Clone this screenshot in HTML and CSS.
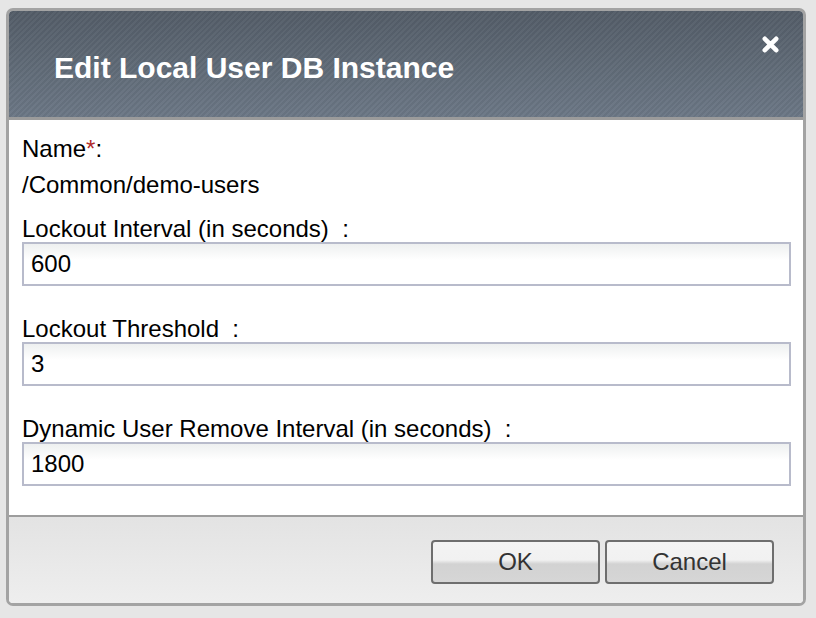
FILE: index.html
```html
<!DOCTYPE html>
<html>
<head>
<meta charset="utf-8">
<link rel="stylesheet" href="styles.css">
</head>
<body>
<div class="dialog">
  <div class="header">
    <h1 class="title">Edit Local User DB Instance</h1>
    <button class="close" aria-label="Close">
      <svg width="19" height="19" viewBox="0 0 19 19"><path d="M3.8 3.8 L15.2 15.2 M15.2 3.8 L3.8 15.2" stroke="#fff" stroke-width="4.6" stroke-linecap="round"/></svg>
    </button>
  </div>
  <div class="content">
    <div class="label name-label">Name<span class="req">*</span>:</div>
    <div class="value">/Common/demo-users</div>
    <div class="label first">Lockout Interval (in seconds)&nbsp; :</div>
    <div class="input">600</div>
    <div class="label">Lockout Threshold&nbsp; :</div>
    <div class="input">3</div>
    <div class="label">Dynamic User Remove Interval (in seconds)&nbsp; :</div>
    <div class="input">1800</div>
  </div>
  <div class="footer">
    <button class="btn">OK</button>
    <button class="btn">Cancel</button>
  </div>
</div>
</body>
</html>
```
FILE: styles.css
```css
html, body {
  margin: 0;
  padding: 0;
  background: #e6e6e6;
}
body {
  padding: 8px 0 0 6px;
  font-family: "Liberation Sans", Arial, sans-serif;
}
.dialog {
  width: 794px;
  border: 3px solid #a3a3a3;
  border-radius: 7px;
  overflow: hidden;
  background: #fff;
}
.header {
  height: 106px;
  border-bottom: 3px solid #9b9b9b;
  background:
    repeating-linear-gradient(135deg, rgba(255,255,255,0.03) 0 2px, rgba(0,0,0,0.03) 2px 4px),
    linear-gradient(#535c67, #6b7785);
  display: flex;
  align-items: flex-start;
  justify-content: space-between;
  padding: 0 23px 0 45px;
}
.title {
  margin: 0;
  padding-top: 41px;
  color: #fff;
  font-size: 30px;
  line-height: 32px;
  font-weight: bold;
}
.close {
  margin-top: 24px;
  padding: 0;
  border: 0;
  background: none;
  width: 19px;
  height: 19px;
  display: block;
}
.close svg { display: block; }
.content {
  padding: 16px 12px 29px 13px;
  color: #000;
  font-size: 24px;
  line-height: 26px;
}
.label {
  margin-top: 30px;
}
.label.name-label { margin-top: 0; }
.label.first { margin-top: 18px; }
.value { margin-top: 10px; }
.req { color: #b02a2a; }
.input {
  height: 40px;
  border: 2px solid #b8bbcb;
  background: linear-gradient(#eef0f0, #ffffff 40%);
  padding-left: 7px;
  line-height: 40px;
  font-size: 24px;
}
.footer {
  border-top: 2px solid #9d9d9d;
  height: 86px;
  background: linear-gradient(#e3e3e3, #eeeeee);
  display: flex;
  justify-content: flex-end;
  align-items: flex-start;
  gap: 5px;
  padding-right: 29px;
}
.btn {
  margin-top: 23px;
  width: 169px;
  height: 44px;
  border: 2px solid #6e6e6e;
  border-radius: 4px;
  background: linear-gradient(#f3f3f3 0, #f1f1f1 45%, #d2d2d2 55%, #d6d6d6 100%);
  font-family: "Liberation Sans", Arial, sans-serif;
  font-size: 24px;
  color: #333;
  padding: 0;
}
```
